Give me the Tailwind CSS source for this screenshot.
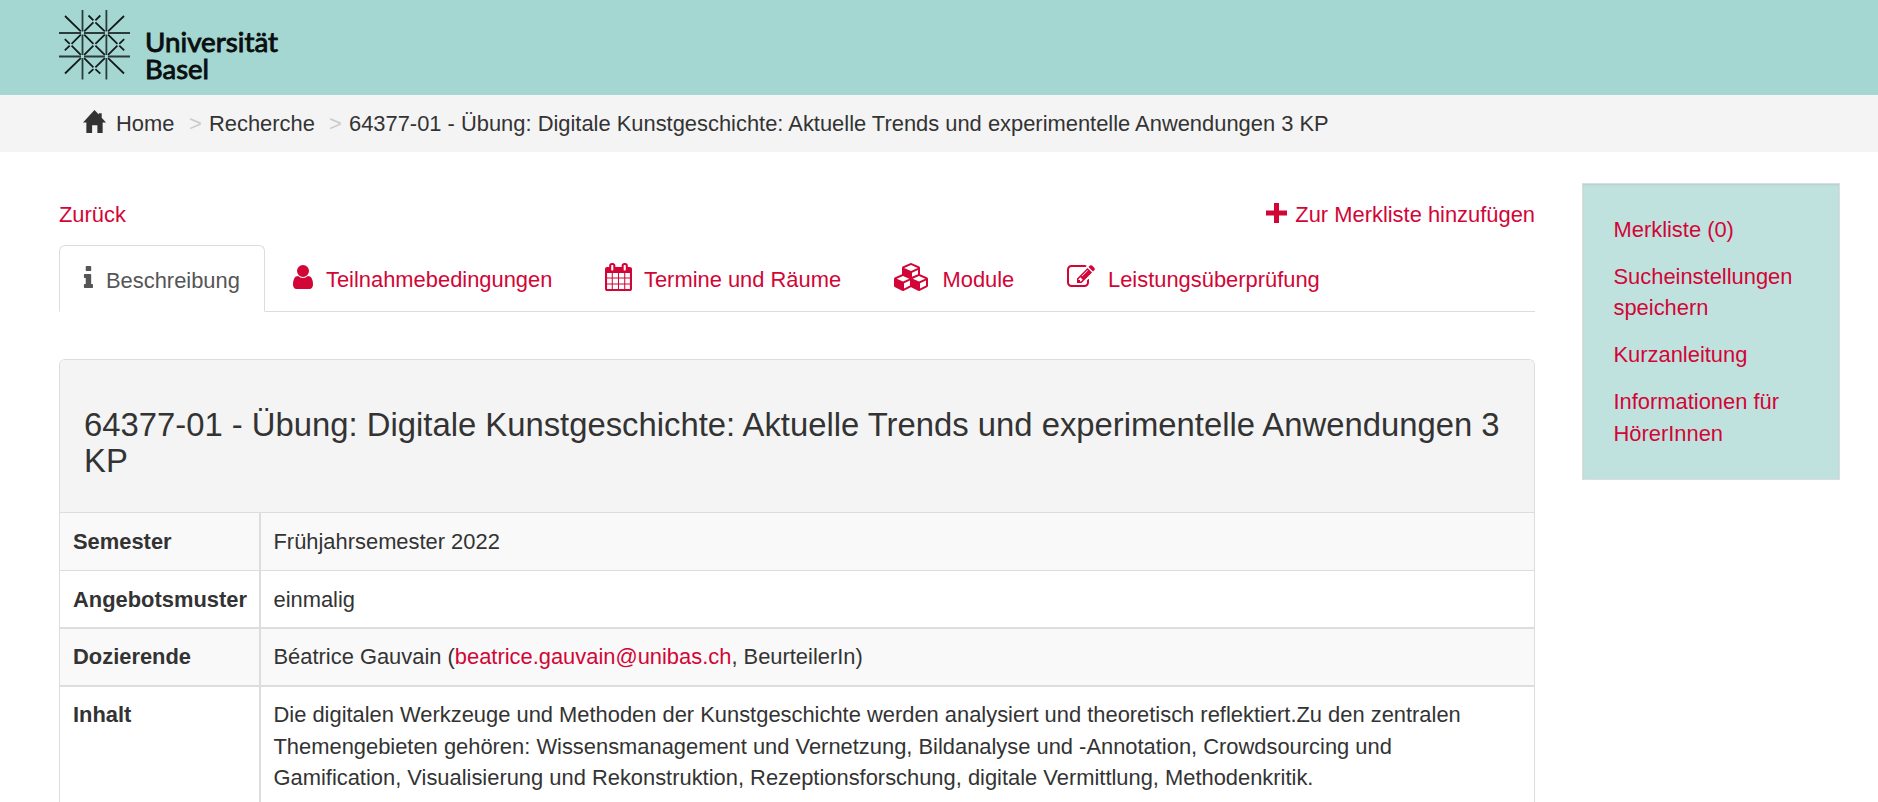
<!DOCTYPE html>
<html lang="de">
<head>
<meta charset="utf-8">
<title>Universität Basel</title>
<script src="https://cdn.jsdelivr.net/npm/@tailwindcss/browser@4"></script>
</head>
<body class="h-[802px] overflow-hidden bg-white font-['Liberation_Sans',Arial,sans-serif] text-[21.9px] leading-[31.3px] text-[#333]">
<header class="flex h-[95px] bg-[#a5d7d2] pl-[59px]">
<svg class="h-[95px] w-[230px]" viewBox="0 0 230 95" fill="none" stroke="#141a1a" stroke-width="1.8" role="img" aria-label="Universität Basel">
<g stroke="#2a3b3a" stroke-width="1.8">
<path d="M23.5 10V31.500M23.5 34.500V55M23.5 58V79.500M47.400 10V31.500M47.400 34.500V55M47.400 58V79.500M0 33H22M25 33H45.900M48.900 33H71M0 56.500H22M25 56.500H45.900M48.900 56.500H71"/>
</g>
<path d="M6 16L21.800 31.400M65 16L49.100 31.400M6 73.500L21.800 58.200M65 73.500L49.100 58.200M25.200 31.400L34.400 22.300M45.800 31.400L36.400 22.300M29.500 15.500L34.400 20.400M41.300 15.500L36.400 20.400M25.200 58.200L34.400 67.300M45.800 58.200L36.400 67.300M29.500 73.700L34.400 69.200M41.300 73.700L36.400 69.200M21.800 34.700L12.600 43.800M21.800 54.900L12.600 45.700M5.800 39.200L10.700 43.800M5.800 50.300L10.700 45.700M49.100 34.700L58.400 43.800M49.100 54.900L58.400 45.700M65.200 39.200L60.300 43.800M65.200 50.300L60.300 45.700M25.200 34.700L34.400 43.800M45.800 34.700L36.400 43.800M25.200 54.900L34.400 45.700M45.800 54.900L36.400 45.700"/>
<g fill="#0b0f0f" stroke="#0b0f0f" stroke-width=".9" font-family="Lato, sans-serif" font-weight="400" font-size="27.5">
<text x="86" y="51.500" textLength="133" lengthAdjust="spacingAndGlyphs">Universität</text>
<text x="86" y="79" textLength="64" lengthAdjust="spacingAndGlyphs">Basel</text>
</g>
</svg>
</header>
<nav class="flex h-[57px] items-center bg-[#f4f4f4] pl-[83px]">
<svg class="-mt-[4px] mr-[10px] h-[23px] w-[23px]" viewBox="0 0 24 24" preserveAspectRatio="none" fill="#333"><path d="M12 0L16.500 4.800V3.500H19.500V8L24 13H20.500V24H15V16H9.500V24H3.500V13H0Z"/></svg>
<span class="w-[73px]">Home</span>
<span class="w-[20px] text-[#ccc]">&gt;</span>
<span class="w-[120px]">Recherche</span>
<span class="w-[20px] text-[#ccc]">&gt;</span>
<span>64377-01 - Übung: Digitale Kunstgeschichte: Aktuelle Trends und experimentelle Anwendungen 3 KP</span>
</nav>
<div class="flex items-start pl-[59px]">
<main class="w-[1476px]">
<div class="flex h-[93px] items-start justify-between pt-[47px] text-[#d20537]">
<a>Zurück</a>
<a class="flex items-start"><svg class="mr-[8px] mt-[4px] h-[20px] w-[21px]" viewBox="0 0 21 21" preserveAspectRatio="none" fill="currentColor"><path d="M8 0h5v8h8v5h-8v8h-5v-8h-8v-5h8z"/></svg>Zur Merkliste hinzufügen</a>
</div>
<div class="flex h-[67px] border-b border-[#ddd] text-[#d20537]">
<a class="-mb-px flex h-[67px] w-[206px] items-center rounded-t-[6px] border border-b-white border-[#ddd] bg-white pl-[23px] text-[#555]"><svg class="-mt-[4px] mr-[13px] h-[22px] w-[10px]" viewBox="512 128 704 1408" preserveAspectRatio="none" fill="currentColor"><path d="M1216 1344v128q0 26-19 45t-45 19h-512q-26 0-45-19t-19-45v-128q0-26 19-45t45-19h64v-384h-64q-26 0-45-19t-19-45v-128q0-26 19-45t45-19h384q26 0 45 19t19 45v576h64q26 0 45 19t19 45zm-128-1152v192q0 26-19 45t-45 19h-256q-26 0-45-19t-19-45v-192q0-26 19-45t45-19h256q26 0 45 19t19 45z"/></svg><span class="pt-[4px]">Beschreibung</span></a>
<a class="flex w-[340px] items-center pl-[28px]"><svg class="-mt-[2px] mr-[13px] h-[24px] w-[20px]" viewBox="256 128 1280 1536" fill="currentColor"><path d="M1536 1399q0 109-62.500 187t-150.500 78h-854q-88 0-150.500-78t-62.500-187q0-85 8.500-160.500t31.500-152 58.500-131 94-89 134.500-34.500q131 128 313 128t313-128q76 0 134.500 34.500t94 89 58.500 131 31.500 152 8.500 160.500zm-256-887q0 159-112.500 271.500t-271.500 112.500-271.500-112.500-112.500-271.500 112.500-271.500 271.500-112.500 271.500 112.500 112.500 271.500z"/></svg><span class="pt-[4px]">Teilnahmebedingungen</span></a>
<a class="flex w-[289px] items-center"><svg class="-mt-[2px] mr-[12px] h-[28px] w-[27px]" viewBox="64 0 1664 1792" preserveAspectRatio="none" fill="currentColor"><path d="M192 1664h288v-288h-288v288zm352 0h320v-288h-320v288zm-352-352h288v-320h-288v320zm352 0h320v-320h-320v320zm-352-384h288v-288h-288v288zm736 736h320v-288h-320v288zm-384-736h320v-288h-320v288zm768 736h288v-288h-288v288zm-384-352h320v-320h-320v320zm-352-864v-288q0-13-9.500-22.500t-22.500-9.500h-64q-13 0-22.500 9.500t-9.500 22.500v288q0 13 9.500 22.500t22.500 9.500h64q13 0 22.500-9.500t9.500-22.500zm736 864h288v-320h-288v320zm-384-384h320v-288h-320v288zm384 0h288v-288h-288v288zm32-480v-288q0-13-9.500-22.500t-22.500-9.500h-64q-13 0-22.500 9.500t-9.500 22.500v288q0 13 9.500 22.500t22.500 9.500h64q13 0 22.500-9.500t9.500-22.500zm384-64v1280q0 52-38 90t-90 38h-1408q-52 0-90-38t-38-90v-1280q0-52 38-90t90-38h128v-96q0-66 47-113t113-47h64q66 0 113 47t47 113v96h384v-96q0-66 47-113t113-47h64q66 0 113 47t47 113v96h128q52 0 90 38t38 90z"/></svg><span class="pt-[4px]">Termine und Räume</span></a>
<a class="flex w-[173px] items-center"><svg class="-mt-[2px] mr-[14.500px] h-[28px] w-[34px]" viewBox="0 0 2176 1792" preserveAspectRatio="none" fill="currentColor"><path d="M640 1632l384-192v-314l-384 164v342zm-64-454l404-173-404-173-404 173zm1088 454l384-192v-314l-384 164v342zm-64-454l404-173-404-173-404 173zm-448-293l384-165v-266l-384 164v267zm-64-379l441-189-441-189-441 189zm1088 518v416q0 36-19 67t-52 47l-448 224q-25 14-57 14t-57-14l-448-224q-4-2-7-4-2 2-7 4l-448 224q-25 14-57 14t-57-14l-448-224q-33-16-52-47t-19-67v-416q0-38 21.500-70t56.500-48l434-186v-400q0-38 21.500-70t56.500-48l448-192q23-10 50-10t50 10l448 192q35 16 56.500 48t21.500 70v400l434 186q36 16 57 48t21 70z"/></svg><span class="pt-[4px]">Module</span></a>
<a class="flex items-center"><svg class="-mt-[4px] mr-[13px] h-[22px] w-[28px]" viewBox="0 128 1792 1408" preserveAspectRatio="none" fill="currentColor"><path d="M888 1184l116-116-152-152-116 116v56h96v96h56zm440-720q-16-16-33 1l-350 350q-17 17-1 33t33-1l350-350q17-17 1-33zm80 594v190q0 119-84.500 203.500t-203.500 84.500h-832q-119 0-203.500-84.500t-84.500-203.500v-832q0-119 84.500-203.500t203.500-84.500h832q63 0 117 25 15 7 18 23 3 17-9 29l-49 49q-14 14-32 8-23-6-45-6h-832q-66 0-113 47t-47 113v832q0 66 47 113t113 47h832q66 0 113-47t47-113v-126q0-13 9-22l64-64q15-15 35-7t20 29zm-96-738l288 288-672 672h-288v-288zm444 132l-92 92-288-288 92-92q28-28 68-28t68 28l152 152q28 28 28 68t-28 68z"/></svg><span class="pt-[4px]">Leistungsüberprüfung</span></a>
</div>
<section class="mt-[47px] h-[460px] overflow-hidden rounded-t-[6px] border border-b-0 border-[#ddd]">
<div class="h-[152px] bg-[#f4f4f4] px-[24px] pt-[47px]"><h1 class="text-[32.82px] leading-[36px]">64377-01 - Übung: Digitale Kunstgeschichte: Aktuelle Trends und experimentelle Anwendungen 3 KP</h1></div>
<dl class="grid grid-cols-[199px_1fr]">
<dt class="h-[58px] border-t border-[#ddd] bg-[#f9f9f9] pl-[13px] pt-[12.500px] font-bold">Semester</dt>
<dd class="border-t border-l-2 border-[#ddd] bg-[#f9f9f9] pl-[12.500px] pt-[12.500px]">Frühjahrsemester 2022</dd>
<dt class="h-[57px] border-t border-[#ddd] pl-[13px] pt-[13px] font-bold">Angebotsmuster</dt>
<dd class="border-t border-l-2 border-[#ddd] pl-[12.500px] pt-[13px]">einmalig</dd>
<dt class="h-[58px] border-t-2 border-[#ddd] bg-[#f9f9f9] pl-[13px] pt-[12px] font-bold">Dozierende</dt>
<dd class="border-t-2 border-l-2 border-[#ddd] bg-[#f9f9f9] pl-[12.500px] pt-[12px]">Béatrice Gauvain (<a class="text-[#d20537]">beatrice.gauvain@unibas.ch</a>, BeurteilerIn)</dd>
<dt class="h-[140px] border-t-2 border-[#ddd] pl-[13px] pt-[12.300px] font-bold">Inhalt</dt>
<dd class="border-t-2 border-l-2 border-[#ddd] pl-[12.500px] pt-[12.300px]">Die digitalen Werkzeuge und Methoden der Kunstgeschichte werden analysiert und theoretisch reflektiert.Zu den zentralen<br>Themengebieten gehören: Wissensmanagement und Vernetzung, Bildanalyse und -Annotation, Crowdsourcing und<br>Gamification, Visualisierung und Rekonstruktion, Rezeptionsforschung, digitale Vermittlung, Methodenkritik.</dd>
</dl>
</section>
</main>
<aside class="ml-[47px] mt-[31px] flex h-[297px] w-[258px] flex-col gap-[15.700px] border border-[#ddd] bg-[#c0e2df] pl-[30.500px] pt-[30px] text-[#d20537] shadow-[inset_0_1px_2px_rgba(0,0,0,0.08)]">
<a>Merkliste (0)</a><a>Sucheinstellungen<br>speichern</a><a>Kurzanleitung</a><a>Informationen für<br>HörerInnen</a>
</aside>
</div>
</body>
</html>
